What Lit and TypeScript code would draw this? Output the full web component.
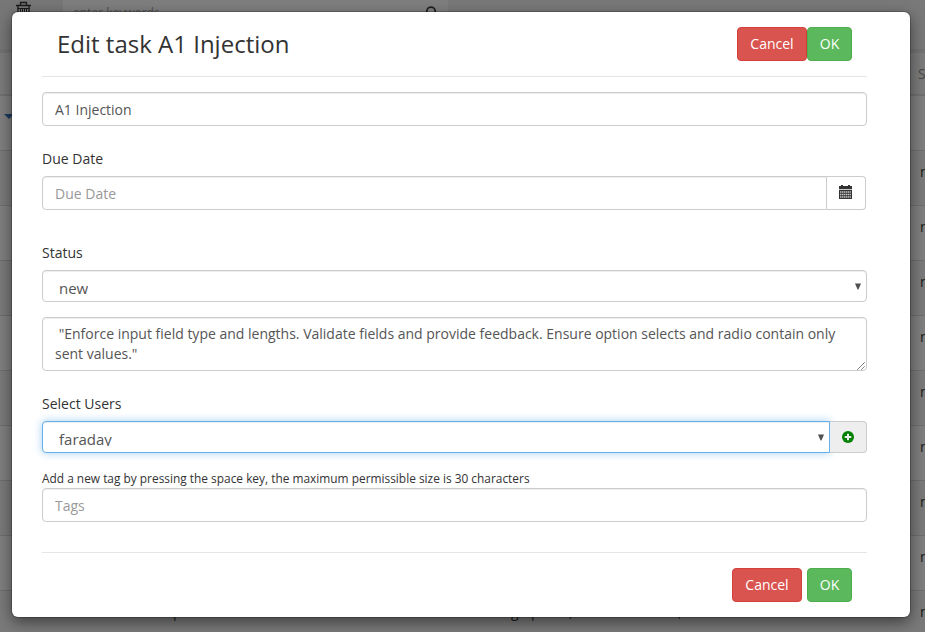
import { LitElement, html, css } from "lit";
import { customElement } from "lit/decorators.js";

const STATUS_ROWS = ["dark", "light", "dark", "light", "dark", "light", "dark", "light"];

@customElement("task-list-page")
class TaskListPage extends LitElement {
  static styles = css`
    :host { display: flex; flex-direction: column; height: 632px; overflow: hidden; background: #797979;
      font: 14px/20px "Open Sans", "Noto Sans", sans-serif; color: #1c1c1c; }
    .bar { display: flex; height: 49px; flex: none; }
    .tools { width: 63px; padding-left: 16px; box-sizing: border-box; background: #777; }
    .tools svg { display: block; margin-top: 1px; }
    .search { width: 385px; background: #7f7f7f; display: flex; justify-content: space-between; align-items: flex-start;
      padding: 3px 12px 0 10px; box-sizing: border-box; color: #4d4d4d; font-size: 12px; }
    .search svg { margin-top: 3px; }
    .head { display: flex; justify-content: flex-end; height: 47px; box-sizing: border-box; border-top: 4px solid #727272;
      border-bottom: 2px solid #707070; background: #7b7b7b; flex: none; }
    .head span { width: 7px; margin-top: 11px; white-space: nowrap; color: #484848; }
    .row { display: flex; justify-content: space-between; height: 55px; flex: none; box-sizing: border-box;
      border-bottom: 1px solid #6d6d6d; }
    .light { background: #7f7f7f; }
    .dark { background: #7a7a7a; }
    .cell { width: 5px; margin-top: 11px; white-space: nowrap; }
    .caret { width: 0; height: 0; margin: 18px 0 0 4px; border: 5px solid transparent; border-top-color: #1b3a5c; border-bottom: 0; }
    .text { display: flex; margin-top: 11px; }
    .a { margin-left: 173px; width: 338px; }
    .b { width: 20px; }
    .c { width: 38px; }
    .d { width: 109px; }
  `;
  render() {
    return html`
      <div class="bar">
        <div class="tools">
          <svg width="15" height="16" viewBox="0 0 15 16" fill="none" stroke="#1b1b1b">
            <path d="M4.5 4V1.5h6V4M0 4.5h15M2 5v9h11V5" stroke-width="1.3"/>
            <path d="M4.5 7v6M6.5 7v6M8.5 7v6M10.5 7v6M1.5 7.5h12"/>
          </svg>
        </div>
        <div class="search"><span>enter keywords</span>
          <svg width="12" height="14" viewBox="0 0 12 14" fill="none" stroke="#202020" stroke-width="1.8"><circle cx="7" cy="5.4" r="4.2"/><path d="M4 9L1 13"/></svg>
        </div>
      </div>
      <div class="head"><span>Status</span></div>
      <div class="row light"><i class="caret"></i></div>
      ${STATUS_ROWS.map((tone) => html`<div class="row ${tone}"><span></span><span class="cell">new</span></div>`)}
      <div class="row dark">
        <div class="text"><span class="a">p</span><span class="b">g</span><span class="c">p</span><span class="d">,</span><span>,</span></div>
        <span class="cell">new</span>
      </div>`;
  }
}

@customElement("edit-task-dialog")
class EditTaskDialog extends LitElement {
  static styles = css`
    :host { display: flex; flex-direction: column; box-sizing: border-box; width: 898px; height: 605px;
      padding: 0 43px 0 30px; background: #fff; border-radius: 6px;
      box-shadow: 0 0 0 1px rgba(0,0,0,.2), 0 5px 15px rgba(0,0,0,.5);
      font: 14px/20px "Open Sans", "Noto Sans", sans-serif; color: #333; }
    header { display: flex; height: 64px; box-sizing: border-box; padding: 15px 15px 0; justify-content: space-between; flex: none; }
    h1 { margin: 0; font-size: 24px; font-weight: 400; line-height: 34px; }
    .actions { display: flex; }
    button { box-sizing: border-box; height: 34px; padding: 0; border: 1px solid; border-radius: 4px; color: #fff;
      font: 14px/20px "Open Sans", "Noto Sans", sans-serif; }
    .cancel { width: 70px; background: #d9534f; border-color: #d43f3a; }
    .ok { width: 45px; background: #5cb85c; border-color: #4cae4c; }
    .rule { height: 1px; background: #e5e5e5; flex: none; }
    .field { box-sizing: border-box; width: 100%; height: 34px; flex: none; margin: 0; padding: 6px 12px; border: 1px solid #ccc; border-radius: 4px;
      background: #fff; color: #555; font: 14px/20px "Open Sans", "Noto Sans", sans-serif; box-shadow: inset 0 1px 1px rgba(0,0,0,.075); outline: none; }
    .field::placeholder { color: #999; opacity: 1; }
    .name { margin-top: 15px; }
    label { flex: none; height: 20px; }
    .l-date { margin: 23px 0 7px; }
    .l-status { margin: 33px 0 7px; }
    .l-users { margin: 23px 0 7px; }
    .group { display: flex; flex: none; }
    .group .field { flex: 1; width: auto; border-radius: 4px 0 0 4px; }
    .date { width: 824px; }
    .addon { display: flex; align-items: center; justify-content: center; box-sizing: border-box; border: 1px solid #ccc; border-left: 0; border-radius: 0 4px 4px 0; }
    .cal { width: 39px; background: #fff; align-items: flex-start; justify-content: flex-start; padding: 8px 0 0 12px; }
    .add { width: 37px; background: #eee; }
    .select { display: flex; justify-content: space-between; height: 32px; padding: 0 5px 0 16px; font-size: 15px; }
    .select span { margin-top: 6px; height: 18px; line-height: 22px; overflow: hidden; }
    .select svg { margin-top: 12px; }
    .group .focus { border-color: #66afe9; box-shadow: inset 0 1px 1px rgba(0,0,0,.075), 0 0 8px rgba(102,175,233,.6); }
    .notes { position: relative; height: 54px; margin-top: 15px; white-space: pre-wrap; }
    .grip { position: absolute; right: 0; bottom: 0; }
    .hint { font-size: 11.9px; line-height: 16px; margin: 17px 0 2px; flex: none; }
    .end { margin-top: 30px; }
    footer { display: flex; justify-content: flex-end; gap: 5px; padding: 15px 15px 0 0; }
  `;
  arrow() {
    return html`<svg width="6" height="7" viewBox="0 0 6 7"><path d="M0 .5h6L3.4 6.5h-.8z" fill="#505050"/></svg>`;
  }
  render() {
    return html`
      <header><h1>Edit task A1 Injection</h1>
        <div class="actions"><button class="cancel">Cancel</button><button class="ok">OK</button></div>
      </header>
      <div class="rule"></div>
      <input class="field name" .value=${"A1 Injection"}>
      <label class="l-date">Due Date</label>
      <div class="group date">
        <input class="field" placeholder="Due Date">
        <div class="addon cal">
          <svg width="13" height="14" viewBox="0 0 13 14">
            <path d="M0 1h2V0h2v1h5V0h2v1h2v3H0z" fill="#333"/>
            <path d="M0 4h13v1H0z" fill="#ccc"/>
            <path d="M0 5h13v9H0z" fill="#333"/>
            <path d="M1 7h11M1 9.5h11M1 12h11" stroke="#c4c4c4" stroke-width="1.5" stroke-dasharray="1.4 .5"/>
          </svg>
        </div>
      </div>
      <label class="l-status">Status</label>
      <div class="field select"><span>new</span>${this.arrow()}</div>
      <div class="field notes"> "Enforce input field type and lengths. Validate fields and provide feedback. Ensure option selects and radio contain only sent values."<svg class="grip" width="9" height="9" viewBox="0 0 9 9"><path d="M.5 8.5l7-7M4.5 8.5l3-3" stroke="#333" stroke-dasharray="1.1 .4"/></svg></div>
      <label class="l-users">Select Users</label>
      <div class="group">
        <div class="field select focus"><span>faraday</span>${this.arrow()}</div>
        <div class="addon add">
          <svg width="12" height="12" viewBox="0 0 12 12"><circle cx="6" cy="6" r="6" fill="#008000"/><path d="M6 2.7v6.6M2.7 6h6.6" stroke="#eee" stroke-width="2"/></svg>
        </div>
      </div>
      <div class="hint">Add a new tag by pressing the space key, the maximum permissible size is 30 characters</div>
      <input class="field" placeholder="Tags">
      <div class="rule end"></div>
      <footer><button class="cancel">Cancel</button><button class="ok">OK</button></footer>`;
  }
}

@customElement("app-root")
class AppRoot extends LitElement {
  static styles = css`
    :host { display: block; position: relative; width: 925px; height: 632px; overflow: hidden; }
    edit-task-dialog { position: absolute; left: 12px; top: 12px; }
  `;
  render() {
    return html`<task-list-page></task-list-page><edit-task-dialog></edit-task-dialog>`;
  }
}
